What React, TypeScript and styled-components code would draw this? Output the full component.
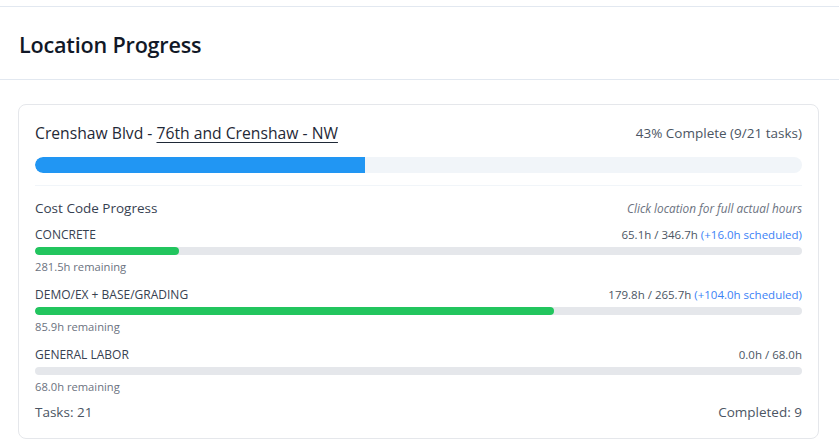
import React from "react";
import styled, { createGlobalStyle } from "styled-components";

const Global = createGlobalStyle`
  html, body { margin: 0; padding: 0; background: #ffffff; }
  body { font-family: "Open Sans", "Noto Sans", sans-serif; -webkit-font-smoothing: antialiased; }
  * { box-sizing: border-box; }
`;

const Page = styled.div`
  width: 839px;
  background: #fff;
`;

const TopStrip = styled.div`
  height: 7px;
  border-bottom: 1px solid #e2e8f0;
`;

const Header = styled.header`
  height: 73px;
  padding: 2px 19px 0;
  display: flex;
  align-items: center;
  border-bottom: 1px solid #e2e8f0;
`;

const Title = styled.h2`
  margin: 0;
  font-size: 21.6px;
  font-weight: 600;
  color: #111827;
  letter-spacing: -0.2px;
`;

const Body = styled.div`
  padding: 24px 20px 0 18px;
`;

const Card = styled.section`
  border: 1px solid #e5e7eb;
  border-radius: 8px;
  padding: 16px;
  background: #fff;
`;

const Row = styled.div<{ $mb?: number }>`
  display: flex;
  justify-content: space-between;
  align-items: center;
  margin-bottom: ${(p) => p.$mb ?? 0}px;
`;

const LocationName = styled.div`
  font-size: 15.7px;
  line-height: 24px;
  font-weight: 500;
  color: #1f2937;
`;

const LocLink = styled.span`
  text-decoration: underline;
  text-underline-offset: 3px;
`;

const Summary = styled.div`
  font-size: 13.5px;
  line-height: 20px;
  color: #4b5563;
`;

const Track = styled.div<{ $h: number; $bg: string }>`
  height: ${(p) => p.$h}px;
  border-radius: 999px;
  background: ${(p) => p.$bg};
  overflow: hidden;
`;

const Fill = styled.div<{ $color: string; $square?: boolean }>`
  height: 100%;
  background: ${(p) => p.$color};
  border-radius: ${(p) => (p.$square ? "999px 0 0 999px" : "999px")};
`;

const Section = styled.div`
  margin-top: 12px;
  padding-top: 12px;
  border-top: 1px solid #f1f5f9;
`;

const SectionTitle = styled.div`
  font-size: 13.5px;
  line-height: 20px;
  font-weight: 500;
  color: #374151;
`;

const Hint = styled.div`
  font-size: 11.8px;
  line-height: 16px;
  font-style: italic;
  color: #6b7280;
`;

const CodeList = styled.div`
  display: flex;
  flex-direction: column;
  gap: 12px;
  margin-top: 9px;
`;

const Code = styled.div`
  display: flex;
  flex-direction: column;
  gap: 4px;
`;

const CodeName = styled.div`
  font-size: 12px;
  line-height: 16px;
  font-weight: 500;
  color: #374151;
`;

const Hours = styled.div`
  font-size: 11.5px;
  line-height: 16px;
  color: #4b5563;
`;

const Scheduled = styled.span`
  color: #3b82f6;
`;

const Remaining = styled.div`
  font-size: 11.2px;
  line-height: 16px;
  color: #6b7280;
`;

const Footer = styled.div`
  margin-top: 7px;
  display: flex;
  justify-content: space-between;
  font-size: 13.5px;
  line-height: 20px;
  color: #4b5563;
`;

type CostCode = {
  name: string;
  actual: string;
  budget: string;
  pct: number;
  remaining: string;
  scheduled?: string;
};

const codes: CostCode[] = [
  { name: "CONCRETE", actual: "65.1", budget: "346.7", pct: 18.78, remaining: "281.5", scheduled: "16.0" },
  { name: "DEMO/EX + BASE/GRADING", actual: "179.8", budget: "265.7", pct: 67.67, remaining: "85.9", scheduled: "104.0" },
  { name: "GENERAL LABOR", actual: "0.0", budget: "68.0", pct: 0, remaining: "68.0" },
];

export default function App() {
  const completed = 9;
  const total = 21;
  const pct = Math.round((completed / total) * 100);
  return (
    <Page>
      <Global />
      <TopStrip />
      <Header>
        <Title>Location Progress</Title>
      </Header>
      <Body>
        <Card>
          <Row $mb={12}>
            <LocationName>
              Crenshaw Blvd - <LocLink>76th and Crenshaw - NW</LocLink>
            </LocationName>
            <Summary>
              {pct}% Complete ({completed}/{total} tasks)
            </Summary>
          </Row>
          <Track $h={16} $bg="#f1f5f9">
            <Fill $color="#2196f3" $square style={{ width: `${pct}%` }} />
          </Track>
          <Section>
            <Row>
              <SectionTitle>Cost Code Progress</SectionTitle>
              <Hint>Click location for full actual hours</Hint>
            </Row>
            <CodeList>
              {codes.map((c) => (
                <Code key={c.name}>
                  <Row>
                    <CodeName>{c.name}</CodeName>
                    <Hours>
                      {c.actual}h / {c.budget}h
                      {c.scheduled !== undefined && (
                        <Scheduled> (+{c.scheduled}h scheduled)</Scheduled>
                      )}
                    </Hours>
                  </Row>
                  <Track $h={8} $bg="#e5e7eb">
                    <Fill $color="#22c55e" style={{ width: `${c.pct}%` }} />
                  </Track>
                  <Remaining>{c.remaining}h remaining</Remaining>
                </Code>
              ))}
            </CodeList>
          </Section>
          <Footer>
            <span>Tasks: {total}</span>
            <span>Completed: {completed}</span>
          </Footer>
        </Card>
      </Body>
    </Page>
  );
}
